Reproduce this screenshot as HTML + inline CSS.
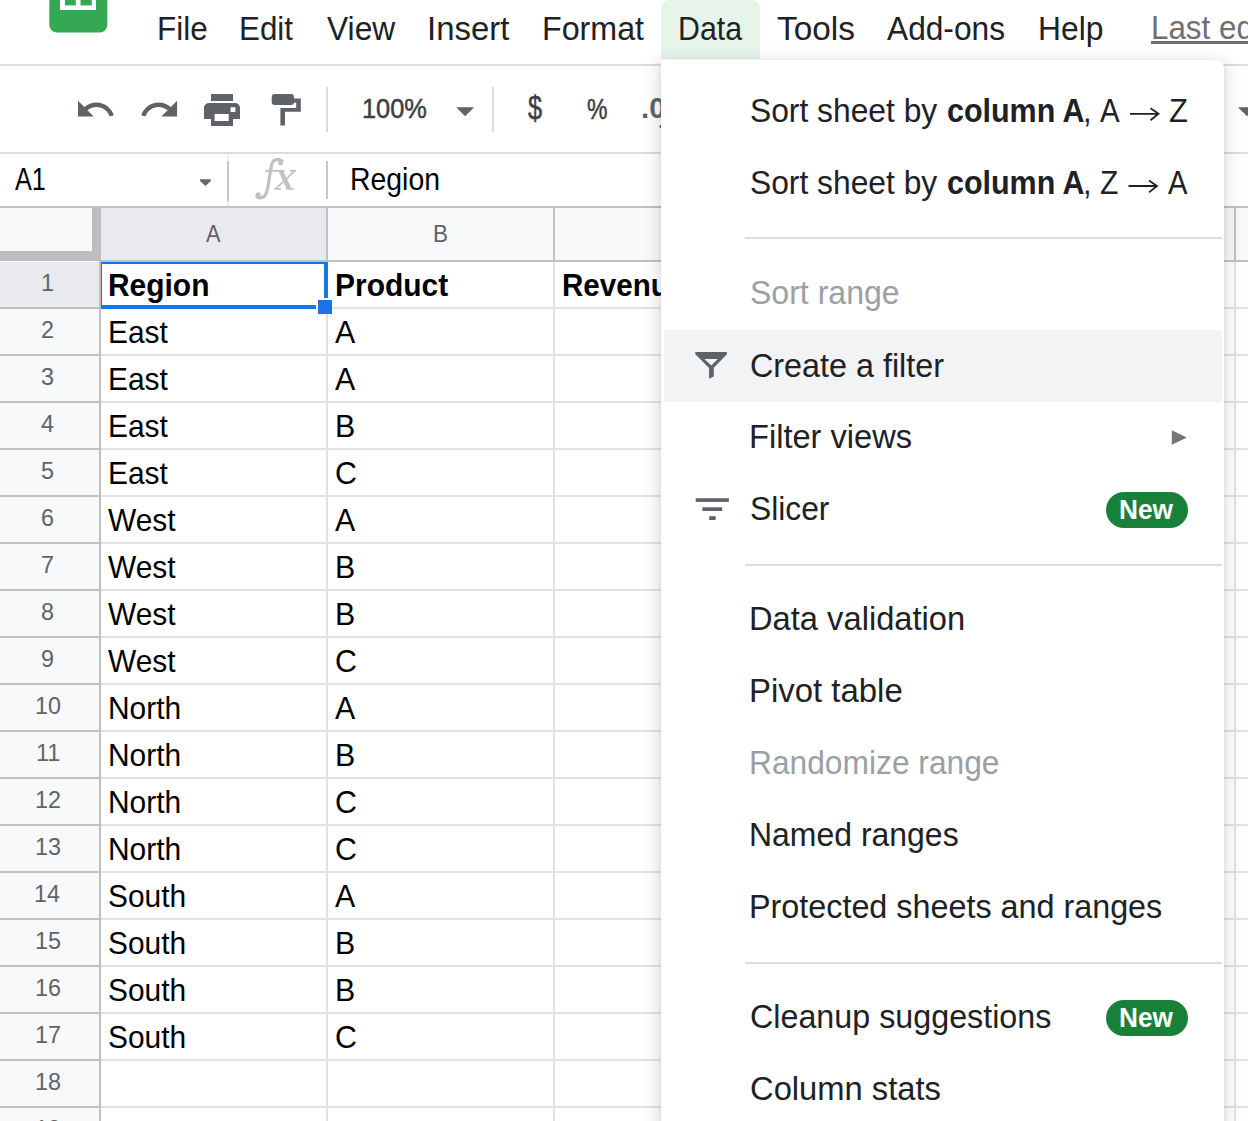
<!DOCTYPE html>
<html><head><meta charset="utf-8"><style>
html,body{margin:0;padding:0;}
body{width:1248px;height:1121px;overflow:hidden;position:relative;background:#fff;font-family:"Liberation Sans",sans-serif;}
.t{position:absolute;white-space:pre;transform-origin:0 0;}
.r{position:absolute;}
.ov{position:absolute;left:0;top:0;}
</style></head><body>
<div class=r style="left:661px;top:0px;width:99px;height:59px;background:#e6f4ea;border-radius:8px 8px 0 0;"></div><div class=r style="left:0px;top:64px;width:1248px;height:2px;background:#dadce0;"></div><div class=r style="left:0px;top:152px;width:1248px;height:2px;background:#dadce0;"></div><div class=r style="left:326px;top:87px;width:2px;height:45px;background:#dadce0;"></div><div class=r style="left:492px;top:87px;width:2px;height:45px;background:#dadce0;"></div><div class=r style="left:227px;top:154px;width:2px;height:52px;background:#efefef;"></div><div class=r style="left:227px;top:161px;width:2px;height:40px;background:#c7c7c7;"></div><div class=r style="left:326px;top:161px;width:2px;height:38px;background:#c7c7c7;"></div><div class=r style="left:0px;top:206px;width:1248px;height:2px;background:#c0c0c0;"></div><div class=r style="left:0px;top:208px;width:1248px;height:52px;background:#f8f9fa;"></div><div class=r style="left:101px;top:208px;width:225px;height:52px;background:#e8eaed;"></div><div class=r style="left:92px;top:208px;width:9px;height:53px;background:#bdbdbd;"></div><div class=r style="left:0px;top:251px;width:101px;height:10px;background:#bdbdbd;"></div><div class=r style="left:326px;top:208px;width:2px;height:54px;background:#c0c0c0;"></div><div class=r style="left:553px;top:208px;width:2px;height:54px;background:#c0c0c0;"></div><div class=r style="left:780px;top:208px;width:2px;height:54px;background:#c0c0c0;"></div><div class=r style="left:1007px;top:208px;width:2px;height:54px;background:#c0c0c0;"></div><div class=r style="left:1234px;top:208px;width:2px;height:54px;background:#c0c0c0;"></div><div class=r style="left:99px;top:260px;width:1149px;height:2px;background:#c0c0c0;"></div><div class=r style="left:0px;top:262px;width:99px;height:859px;background:#f8f9fa;"></div><div class=r style="left:0px;top:262px;width:99px;height:45px;background:#e8eaed;"></div><div class=r style="left:99px;top:261px;width:2px;height:860px;background:#c0c0c0;"></div><div class=r style="left:0px;top:307.0px;width:99px;height:2.0px;background:#c0c0c0;"></div><div class=r style="left:101px;top:307.0px;width:1147px;height:2.0px;background:#e2e2e2;"></div><div class=r style="left:0px;top:354.0px;width:99px;height:2.0px;background:#c0c0c0;"></div><div class=r style="left:101px;top:354.0px;width:1147px;height:2.0px;background:#e2e2e2;"></div><div class=r style="left:0px;top:401.0px;width:99px;height:2.0px;background:#c0c0c0;"></div><div class=r style="left:101px;top:401.0px;width:1147px;height:2.0px;background:#e2e2e2;"></div><div class=r style="left:0px;top:448.0px;width:99px;height:2.0px;background:#c0c0c0;"></div><div class=r style="left:101px;top:448.0px;width:1147px;height:2.0px;background:#e2e2e2;"></div><div class=r style="left:0px;top:495.0px;width:99px;height:2.0px;background:#c0c0c0;"></div><div class=r style="left:101px;top:495.0px;width:1147px;height:2.0px;background:#e2e2e2;"></div><div class=r style="left:0px;top:542.0px;width:99px;height:2.0px;background:#c0c0c0;"></div><div class=r style="left:101px;top:542.0px;width:1147px;height:2.0px;background:#e2e2e2;"></div><div class=r style="left:0px;top:589.0px;width:99px;height:2.0px;background:#c0c0c0;"></div><div class=r style="left:101px;top:589.0px;width:1147px;height:2.0px;background:#e2e2e2;"></div><div class=r style="left:0px;top:636.0px;width:99px;height:2.0px;background:#c0c0c0;"></div><div class=r style="left:101px;top:636.0px;width:1147px;height:2.0px;background:#e2e2e2;"></div><div class=r style="left:0px;top:683.0px;width:99px;height:2.0px;background:#c0c0c0;"></div><div class=r style="left:101px;top:683.0px;width:1147px;height:2.0px;background:#e2e2e2;"></div><div class=r style="left:0px;top:730.0px;width:99px;height:2.0px;background:#c0c0c0;"></div><div class=r style="left:101px;top:730.0px;width:1147px;height:2.0px;background:#e2e2e2;"></div><div class=r style="left:0px;top:777.0px;width:99px;height:2.0px;background:#c0c0c0;"></div><div class=r style="left:101px;top:777.0px;width:1147px;height:2.0px;background:#e2e2e2;"></div><div class=r style="left:0px;top:824.0px;width:99px;height:2.0px;background:#c0c0c0;"></div><div class=r style="left:101px;top:824.0px;width:1147px;height:2.0px;background:#e2e2e2;"></div><div class=r style="left:0px;top:871.0px;width:99px;height:2.0px;background:#c0c0c0;"></div><div class=r style="left:101px;top:871.0px;width:1147px;height:2.0px;background:#e2e2e2;"></div><div class=r style="left:0px;top:918.0px;width:99px;height:2.0px;background:#c0c0c0;"></div><div class=r style="left:101px;top:918.0px;width:1147px;height:2.0px;background:#e2e2e2;"></div><div class=r style="left:0px;top:965.0px;width:99px;height:2.0px;background:#c0c0c0;"></div><div class=r style="left:101px;top:965.0px;width:1147px;height:2.0px;background:#e2e2e2;"></div><div class=r style="left:0px;top:1012.0px;width:99px;height:2.0px;background:#c0c0c0;"></div><div class=r style="left:101px;top:1012.0px;width:1147px;height:2.0px;background:#e2e2e2;"></div><div class=r style="left:0px;top:1059.0px;width:99px;height:2.0px;background:#c0c0c0;"></div><div class=r style="left:101px;top:1059.0px;width:1147px;height:2.0px;background:#e2e2e2;"></div><div class=r style="left:0px;top:1106.0px;width:99px;height:2.0px;background:#c0c0c0;"></div><div class=r style="left:101px;top:1106.0px;width:1147px;height:2.0px;background:#e2e2e2;"></div><div class=r style="left:0px;top:1153.0px;width:99px;height:2.0px;background:#c0c0c0;"></div><div class=r style="left:101px;top:1153.0px;width:1147px;height:2.0px;background:#e2e2e2;"></div><div class=r style="left:326px;top:262px;width:2px;height:859px;background:#e2e2e2;"></div><div class=r style="left:553px;top:262px;width:2px;height:859px;background:#e2e2e2;"></div><div class=r style="left:780px;top:262px;width:2px;height:859px;background:#e2e2e2;"></div><div class=r style="left:1007px;top:262px;width:2px;height:859px;background:#e2e2e2;"></div><div class=r style="left:1234px;top:262px;width:2px;height:859px;background:#e2e2e2;"></div>
<div class=t style="left:157.19px;top:11.80px;font-size:33.0px;line-height:33.0px;font-weight:400;color:#202124;font-family:'Liberation Sans';transform:scaleX(0.9540);">File</div><div class=t style="left:239.40px;top:11.80px;font-size:33.0px;line-height:33.0px;font-weight:400;color:#202124;font-family:'Liberation Sans';transform:scaleX(0.9491);">Edit</div><div class=t style="left:326.70px;top:11.80px;font-size:33.0px;line-height:33.0px;font-weight:400;color:#202124;font-family:'Liberation Sans';transform:scaleX(0.9620);">View</div><div class=t style="left:426.81px;top:11.80px;font-size:33.0px;line-height:33.0px;font-weight:400;color:#202124;font-family:'Liberation Sans';transform:scaleX(0.9975);">Insert</div><div class=t style="left:542.05px;top:11.80px;font-size:33.0px;line-height:33.0px;font-weight:400;color:#202124;font-family:'Liberation Sans';transform:scaleX(0.9767);">Format</div><div class=t style="left:678.16px;top:11.80px;font-size:33.0px;line-height:33.0px;font-weight:400;color:#202124;font-family:'Liberation Sans';transform:scaleX(0.9191);">Data</div><div class=t style="left:776.90px;top:11.80px;font-size:33.0px;line-height:33.0px;font-weight:400;color:#202124;font-family:'Liberation Sans';transform:scaleX(1.0105);">Tools</div><div class=t style="left:887.30px;top:11.80px;font-size:33.0px;line-height:33.0px;font-weight:400;color:#202124;font-family:'Liberation Sans';transform:scaleX(0.9598);">Add-ons</div><div class=t style="left:1037.87px;top:11.80px;font-size:33.0px;line-height:33.0px;font-weight:400;color:#202124;font-family:'Liberation Sans';transform:scaleX(0.9631);">Help</div><div class=t style="left:1150.80px;top:10.90px;font-size:33.0px;line-height:33.0px;font-weight:400;color:#6f6f6f;font-family:'Liberation Sans';transform:scaleX(0.9500);">Last edit was seconds ago</div><div class=t style="left:361.68px;top:95.00px;font-size:27.9px;line-height:27.9px;font-weight:400;color:#3c4043;font-family:'Liberation Sans';transform:scaleX(0.9101);-webkit-text-stroke:0.5px #3c4043;">100%</div><div class=t style="left:527.80px;top:92.30px;font-size:32.5px;line-height:32.5px;font-weight:400;color:#3c4043;font-family:'Liberation Sans';transform:scaleX(0.7778);-webkit-text-stroke:0.5px #3c4043;">$</div><div class=t style="left:587.21px;top:94.60px;font-size:29.1px;line-height:29.1px;font-weight:400;color:#3c4043;font-family:'Liberation Sans';transform:scaleX(0.7917);-webkit-text-stroke:0.5px #3c4043;">%</div><div class=t style="left:641.00px;top:92.70px;font-size:29.3px;line-height:29.3px;font-weight:700;color:#5f6368;font-family:'Liberation Sans';">.0</div><div class=t style="left:15.30px;top:165.10px;font-size:30.8px;line-height:30.8px;font-weight:400;color:#000;font-family:'Liberation Sans';transform:scaleX(0.8189);">A1</div><div class=t style="left:349.98px;top:164.10px;font-size:31.25px;line-height:31.25px;font-weight:400;color:#000;font-family:'Liberation Sans';transform:scaleX(0.9083);">Region</div><div class=t style="left:206.10px;top:221.70px;font-size:24.4px;line-height:24.4px;font-weight:400;color:#5f6368;font-family:'Liberation Sans';transform:scaleX(0.8912);">A</div><div class=t style="left:433.05px;top:221.80px;font-size:24.4px;line-height:24.4px;font-weight:400;color:#5f6368;font-family:'Liberation Sans';transform:scaleX(0.9231);">B</div><div class=t style="left:41.01px;top:271.30px;font-size:24.1px;line-height:24.1px;font-weight:400;color:#5f6368;font-family:'Liberation Sans';transform:scaleX(0.9700);">1</div><div class=t style="left:41.01px;top:318.00px;font-size:24.1px;line-height:24.1px;font-weight:400;color:#5f6368;font-family:'Liberation Sans';transform:scaleX(0.9700);">2</div><div class=t style="left:41.01px;top:365.00px;font-size:24.1px;line-height:24.1px;font-weight:400;color:#5f6368;font-family:'Liberation Sans';transform:scaleX(0.9700);">3</div><div class=t style="left:41.49px;top:412.00px;font-size:24.1px;line-height:24.1px;font-weight:400;color:#5f6368;font-family:'Liberation Sans';transform:scaleX(0.9700);">4</div><div class=t style="left:41.01px;top:459.00px;font-size:24.1px;line-height:24.1px;font-weight:400;color:#5f6368;font-family:'Liberation Sans';transform:scaleX(0.9700);">5</div><div class=t style="left:41.01px;top:506.00px;font-size:24.1px;line-height:24.1px;font-weight:400;color:#5f6368;font-family:'Liberation Sans';transform:scaleX(0.9700);">6</div><div class=t style="left:41.01px;top:553.00px;font-size:24.1px;line-height:24.1px;font-weight:400;color:#5f6368;font-family:'Liberation Sans';transform:scaleX(0.9700);">7</div><div class=t style="left:41.01px;top:600.00px;font-size:24.1px;line-height:24.1px;font-weight:400;color:#5f6368;font-family:'Liberation Sans';transform:scaleX(0.9700);">8</div><div class=t style="left:41.01px;top:647.00px;font-size:24.1px;line-height:24.1px;font-weight:400;color:#5f6368;font-family:'Liberation Sans';transform:scaleX(0.9700);">9</div><div class=t style="left:34.70px;top:694.00px;font-size:24.1px;line-height:24.1px;font-weight:400;color:#5f6368;font-family:'Liberation Sans';transform:scaleX(0.9700);">10</div><div class=t style="left:35.67px;top:741.00px;font-size:24.1px;line-height:24.1px;font-weight:400;color:#5f6368;font-family:'Liberation Sans';transform:scaleX(0.9700);">11</div><div class=t style="left:34.70px;top:788.00px;font-size:24.1px;line-height:24.1px;font-weight:400;color:#5f6368;font-family:'Liberation Sans';transform:scaleX(0.9700);">12</div><div class=t style="left:34.70px;top:835.00px;font-size:24.1px;line-height:24.1px;font-weight:400;color:#5f6368;font-family:'Liberation Sans';transform:scaleX(0.9700);">13</div><div class=t style="left:34.22px;top:882.00px;font-size:24.1px;line-height:24.1px;font-weight:400;color:#5f6368;font-family:'Liberation Sans';transform:scaleX(0.9700);">14</div><div class=t style="left:34.70px;top:929.00px;font-size:24.1px;line-height:24.1px;font-weight:400;color:#5f6368;font-family:'Liberation Sans';transform:scaleX(0.9700);">15</div><div class=t style="left:34.70px;top:976.00px;font-size:24.1px;line-height:24.1px;font-weight:400;color:#5f6368;font-family:'Liberation Sans';transform:scaleX(0.9700);">16</div><div class=t style="left:34.70px;top:1023.00px;font-size:24.1px;line-height:24.1px;font-weight:400;color:#5f6368;font-family:'Liberation Sans';transform:scaleX(0.9700);">17</div><div class=t style="left:34.70px;top:1070.00px;font-size:24.1px;line-height:24.1px;font-weight:400;color:#5f6368;font-family:'Liberation Sans';transform:scaleX(0.9700);">18</div><div class=t style="left:34.70px;top:1117.00px;font-size:24.1px;line-height:24.1px;font-weight:400;color:#5f6368;font-family:'Liberation Sans';transform:scaleX(0.9700);">19</div><div class=t style="left:107.72px;top:270.00px;font-size:31.8px;line-height:31.8px;font-weight:700;color:#000;font-family:'Liberation Sans';transform:scaleX(0.9413);">Region</div><div class=t style="left:334.52px;top:270.00px;font-size:31.8px;line-height:31.8px;font-weight:700;color:#000;font-family:'Liberation Sans';transform:scaleX(0.9424);">Product</div><div class=t style="left:561.74px;top:270.00px;font-size:31.8px;line-height:31.8px;font-weight:700;color:#000;font-family:'Liberation Sans';transform:scaleX(0.9300);">Revenue</div><div class=t style="left:107.90px;top:317.40px;font-size:31.8px;line-height:31.8px;font-weight:400;color:#000;font-family:'Liberation Sans';transform:scaleX(0.9400);">East</div><div class=t style="left:334.50px;top:317.40px;font-size:31.8px;line-height:31.8px;font-weight:400;color:#000;font-family:'Liberation Sans';transform:scaleX(0.9550);">A</div><div class=t style="left:107.90px;top:364.40px;font-size:31.8px;line-height:31.8px;font-weight:400;color:#000;font-family:'Liberation Sans';transform:scaleX(0.9400);">East</div><div class=t style="left:334.50px;top:364.40px;font-size:31.8px;line-height:31.8px;font-weight:400;color:#000;font-family:'Liberation Sans';transform:scaleX(0.9550);">A</div><div class=t style="left:107.90px;top:411.40px;font-size:31.8px;line-height:31.8px;font-weight:400;color:#000;font-family:'Liberation Sans';transform:scaleX(0.9400);">East</div><div class=t style="left:334.50px;top:411.40px;font-size:31.8px;line-height:31.8px;font-weight:400;color:#000;font-family:'Liberation Sans';transform:scaleX(0.9550);">B</div><div class=t style="left:107.90px;top:458.40px;font-size:31.8px;line-height:31.8px;font-weight:400;color:#000;font-family:'Liberation Sans';transform:scaleX(0.9400);">East</div><div class=t style="left:334.50px;top:458.40px;font-size:31.8px;line-height:31.8px;font-weight:400;color:#000;font-family:'Liberation Sans';transform:scaleX(0.9550);">C</div><div class=t style="left:107.90px;top:505.40px;font-size:31.8px;line-height:31.8px;font-weight:400;color:#000;font-family:'Liberation Sans';transform:scaleX(0.9400);">West</div><div class=t style="left:334.50px;top:505.40px;font-size:31.8px;line-height:31.8px;font-weight:400;color:#000;font-family:'Liberation Sans';transform:scaleX(0.9550);">A</div><div class=t style="left:107.90px;top:552.40px;font-size:31.8px;line-height:31.8px;font-weight:400;color:#000;font-family:'Liberation Sans';transform:scaleX(0.9400);">West</div><div class=t style="left:334.50px;top:552.40px;font-size:31.8px;line-height:31.8px;font-weight:400;color:#000;font-family:'Liberation Sans';transform:scaleX(0.9550);">B</div><div class=t style="left:107.90px;top:599.40px;font-size:31.8px;line-height:31.8px;font-weight:400;color:#000;font-family:'Liberation Sans';transform:scaleX(0.9400);">West</div><div class=t style="left:334.50px;top:599.40px;font-size:31.8px;line-height:31.8px;font-weight:400;color:#000;font-family:'Liberation Sans';transform:scaleX(0.9550);">B</div><div class=t style="left:107.90px;top:646.40px;font-size:31.8px;line-height:31.8px;font-weight:400;color:#000;font-family:'Liberation Sans';transform:scaleX(0.9400);">West</div><div class=t style="left:334.50px;top:646.40px;font-size:31.8px;line-height:31.8px;font-weight:400;color:#000;font-family:'Liberation Sans';transform:scaleX(0.9550);">C</div><div class=t style="left:107.90px;top:693.40px;font-size:31.8px;line-height:31.8px;font-weight:400;color:#000;font-family:'Liberation Sans';transform:scaleX(0.9400);">North</div><div class=t style="left:334.50px;top:693.40px;font-size:31.8px;line-height:31.8px;font-weight:400;color:#000;font-family:'Liberation Sans';transform:scaleX(0.9550);">A</div><div class=t style="left:107.90px;top:740.40px;font-size:31.8px;line-height:31.8px;font-weight:400;color:#000;font-family:'Liberation Sans';transform:scaleX(0.9400);">North</div><div class=t style="left:334.50px;top:740.40px;font-size:31.8px;line-height:31.8px;font-weight:400;color:#000;font-family:'Liberation Sans';transform:scaleX(0.9550);">B</div><div class=t style="left:107.90px;top:787.40px;font-size:31.8px;line-height:31.8px;font-weight:400;color:#000;font-family:'Liberation Sans';transform:scaleX(0.9400);">North</div><div class=t style="left:334.50px;top:787.40px;font-size:31.8px;line-height:31.8px;font-weight:400;color:#000;font-family:'Liberation Sans';transform:scaleX(0.9550);">C</div><div class=t style="left:107.90px;top:834.40px;font-size:31.8px;line-height:31.8px;font-weight:400;color:#000;font-family:'Liberation Sans';transform:scaleX(0.9400);">North</div><div class=t style="left:334.50px;top:834.40px;font-size:31.8px;line-height:31.8px;font-weight:400;color:#000;font-family:'Liberation Sans';transform:scaleX(0.9550);">C</div><div class=t style="left:107.90px;top:881.40px;font-size:31.8px;line-height:31.8px;font-weight:400;color:#000;font-family:'Liberation Sans';transform:scaleX(0.9400);">South</div><div class=t style="left:334.50px;top:881.40px;font-size:31.8px;line-height:31.8px;font-weight:400;color:#000;font-family:'Liberation Sans';transform:scaleX(0.9550);">A</div><div class=t style="left:107.90px;top:928.40px;font-size:31.8px;line-height:31.8px;font-weight:400;color:#000;font-family:'Liberation Sans';transform:scaleX(0.9400);">South</div><div class=t style="left:334.50px;top:928.40px;font-size:31.8px;line-height:31.8px;font-weight:400;color:#000;font-family:'Liberation Sans';transform:scaleX(0.9550);">B</div><div class=t style="left:107.90px;top:975.40px;font-size:31.8px;line-height:31.8px;font-weight:400;color:#000;font-family:'Liberation Sans';transform:scaleX(0.9400);">South</div><div class=t style="left:334.50px;top:975.40px;font-size:31.8px;line-height:31.8px;font-weight:400;color:#000;font-family:'Liberation Sans';transform:scaleX(0.9550);">B</div><div class=t style="left:107.90px;top:1022.40px;font-size:31.8px;line-height:31.8px;font-weight:400;color:#000;font-family:'Liberation Sans';transform:scaleX(0.9400);">South</div><div class=t style="left:334.50px;top:1022.40px;font-size:31.8px;line-height:31.8px;font-weight:400;color:#000;font-family:'Liberation Sans';transform:scaleX(0.9550);">C</div>
<div class=r style="left:101px;top:262px;width:227px;height:2px;background:#1a73e8;"></div><div class=r style="left:101px;top:262px;width:1px;height:47px;background:#1a73e8;"></div><div class=r style="left:324px;top:262px;width:4px;height:36px;background:#1a73e8;"></div><div class=r style="left:101px;top:305px;width:215px;height:4px;background:#1a73e8;"></div><div class=r style="left:316px;top:298px;width:16px;height:16px;background:#fff;"></div><div class=r style="left:318px;top:300px;width:14px;height:14px;background:#1a73e8;"></div>

<svg class=ov width="1248" height="1121" viewBox="0 0 1248 1121">
 <!-- logo -->
 <rect x="49.3" y="-20" width="58" height="52.4" rx="7.7" fill="#34a853"/>
 <rect x="60" y="-20" width="36" height="30" fill="#fff"/>
 <rect x="64.9" y="-20" width="10.9" height="25.4" fill="#34a853"/>
 <rect x="80.5" y="-20" width="11.3" height="25.4" fill="#34a853"/>
 <!-- undo -->
 <g transform="translate(74.5,88.5) scale(1.75)" fill="#5f6368"><path d="M12.5 8c-2.65 0-5.05.99-6.9 2.6L2 7v9h9l-3.62-3.62c1.39-1.16 3.16-1.88 5.12-1.88 3.54 0 6.55 2.31 7.6 5.5l2.37-.78C21.08 11.03 17.15 8 12.5 8z"/></g>
 <!-- redo -->
 <g transform="translate(138.6,88.5) scale(1.75)" fill="#5f6368"><path d="M18.4 10.6C16.55 8.99 14.15 8 11.5 8c-4.65 0-8.58 3.03-9.96 7.22L3.9 16c1.05-3.19 4.05-5.5 7.6-5.5 1.95 0 3.73.72 5.12 1.88L13 16h9V7l-3.6 3.6z"/></g>
 <!-- print -->
 <path fill="#5f6368" fill-rule="evenodd" d="M211 94h22v7h-22z M209 103h26c2.8 0 5 2.2 5 5v11h-7v7h-22v-7h-7v-11c0-2.8 2.2-5 5-5z M214.6 113.9h14.1v7.1h-14.1z M230.6 107.3h4.8v4.7h-4.8z"/>
 <!-- paint format -->
 <rect x="271.7" y="94" width="22.3" height="11.1" rx="3" fill="#5f6368"/>
 <path fill="#5f6368" d="M294 98.5h6.8v13.3h-15.8v13.7h-4.6v-17.6h15.8v-5.2h-2.2z"/>
 <!-- zoom dropdown -->
 <path fill="#5f6368" d="M456.1 107.2h18l-9 9z"/>
 <!-- decimal arrow tip -->
 <path fill="#5f6368" d="M658.9 126.5L661.5 124.3V128.7Z"/>
 <!-- name box arrow -->
 <path fill="#676767" d="M200.1 179.2H210.8V181L205.45 186L200.1 181Z"/>
 <!-- fx -->
 <g fill="#c0c1c3"><path d="M282.6 162.2C281.8 160 279.5 159.3 277 159.3C273.5 159.5 271.9 162.5 271.3 166L267.8 187.5C266.8 194 263.8 197.9 260.3 197.9C258.6 197.9 257 197 256.3 195.3" fill="none" stroke="#c0c1c3" stroke-width="3.2"/>
  <circle cx="280.6" cy="163.0" r="2.4"/><circle cx="258.3" cy="194.6" r="2.4"/>
  <rect x="265.1" y="169.9" width="19.4" height="1.9"/><rect x="289.9" y="169.9" width="6.1" height="1.9"/>
  <rect x="274.2" y="188" width="6.6" height="1.8"/><rect x="286.2" y="188" width="7.4" height="1.8"/>
  <path d="M278.9 171.8L283.5 171.8L291.4 188L286.2 188Z"/><path d="M292.6 171.8L295 171.8L277.8 188L275.4 188Z"/></g>
 <!-- toolbar right edge arrow -->
 <path fill="#5f6368" d="M1238 107.2h18l-9 9z"/>
</svg>
<div class=r style="left:1151px;top:41px;width:97px;height:3px;background:#6f6f6f;"></div>
<div id=dd style="position:absolute;left:661px;top:60px;width:563px;height:1100px;background:#fff;border-radius:0 8px 8px 8px;box-shadow:0 4px 16px 4px rgba(60,64,67,.15),0 2px 4px rgba(60,64,67,.1);"></div>
<div class=r style="left:664px;top:330px;width:558px;height:72px;background:#f1f3f4;"></div><div class=r style="left:745px;top:237px;width:477px;height:2px;background:#dadce0;"></div><div class=r style="left:745px;top:564px;width:477px;height:2px;background:#dadce0;"></div><div class=r style="left:745px;top:962px;width:477px;height:2px;background:#dadce0;"></div><div class=r style="left:1106px;top:491.8px;width:82px;height:36.3px;border-radius:18px;background:#188038"></div><div class=r style="left:1106px;top:1000.2px;width:82px;height:36px;border-radius:18px;background:#188038"></div>

<svg class=ov width="1248" height="1121" viewBox="0 0 1248 1121">
 <path fill="#5f6368" d="M695.3 352H726.9V354.3L713.8 367.7V376.6L709.1 378.8V367.9L695.3 354.3Z M704.4 359H717.8L711.3 365.6Z" fill-rule="evenodd"/>
 <rect x="695.7" y="498.2" width="33.2" height="3.7" fill="#5f6368"/>
 <rect x="702.4" y="507.3" width="19.8" height="3.7" fill="#5f6368"/>
 <rect x="709.2" y="516.2" width="6.5" height="3.8" fill="#5f6368"/>
 <path fill="#757575" d="M1171.8 430.3L1186.9 437.55L1171.8 444.8Z"/>
 <!-- arrows -->
 <g stroke="#202124" stroke-width="1.8" fill="none">
   <path d="M1130 113.8H1158.5 M1150.5 108.2L1158.5 113.8L1150.5 120.2"/>
   <path d="M1128.5 186H1157 M1149 180.4L1157 186L1149 192.4"/>
 </g>
</svg>
<div class=t style="left:749.62px;top:94.80px;font-size:32.4px;line-height:32.4px;font-weight:400;color:#202124;font-family:'Liberation Sans';transform:scaleX(0.9811);">Sort sheet by</div><div class=t style="left:946.76px;top:94.80px;font-size:32.4px;line-height:32.4px;font-weight:700;color:#202124;font-family:'Liberation Sans';transform:scaleX(0.9400);">column A</div><div class=t style="left:1082.55px;top:94.80px;font-size:32.4px;line-height:32.4px;font-weight:400;color:#202124;font-family:'Liberation Sans';transform:scaleX(0.9500);">,</div><div class=t style="left:1100.00px;top:94.80px;font-size:32.4px;line-height:32.4px;font-weight:400;color:#202124;font-family:'Liberation Sans';transform:scaleX(0.9091);">A</div><div class=t style="left:1169.04px;top:94.80px;font-size:32.4px;line-height:32.4px;font-weight:400;color:#202124;font-family:'Liberation Sans';transform:scaleX(0.9556);">Z</div><div class=t style="left:749.62px;top:166.80px;font-size:32.4px;line-height:32.4px;font-weight:400;color:#202124;font-family:'Liberation Sans';transform:scaleX(0.9811);">Sort sheet by</div><div class=t style="left:946.76px;top:166.80px;font-size:32.4px;line-height:32.4px;font-weight:700;color:#202124;font-family:'Liberation Sans';transform:scaleX(0.9400);">column A</div><div class=t style="left:1082.55px;top:166.80px;font-size:32.4px;line-height:32.4px;font-weight:400;color:#202124;font-family:'Liberation Sans';transform:scaleX(0.9500);">,</div><div class=t style="left:1099.77px;top:166.80px;font-size:32.4px;line-height:32.4px;font-weight:400;color:#202124;font-family:'Liberation Sans';transform:scaleX(0.9278);">Z</div><div class=t style="left:1167.90px;top:166.80px;font-size:32.4px;line-height:32.4px;font-weight:400;color:#202124;font-family:'Liberation Sans';transform:scaleX(0.9000);">A</div><div class=t style="left:749.61px;top:276.80px;font-size:32.4px;line-height:32.4px;font-weight:400;color:#9aa0a6;font-family:'Liberation Sans';transform:scaleX(0.9893);">Sort range</div><div class=t style="left:749.60px;top:349.50px;font-size:32.4px;line-height:32.4px;font-weight:400;color:#202124;font-family:'Liberation Sans';transform:scaleX(0.9979);">Create a filter</div><div class=t style="left:748.59px;top:420.90px;font-size:32.4px;line-height:32.4px;font-weight:400;color:#202124;font-family:'Liberation Sans';transform:scaleX(1.0069);">Filter views</div><div class=t style="left:749.62px;top:492.50px;font-size:32.4px;line-height:32.4px;font-weight:400;color:#202124;font-family:'Liberation Sans';transform:scaleX(0.9800);">Slicer</div><div class=t style="left:748.58px;top:603.00px;font-size:32.4px;line-height:32.4px;font-weight:400;color:#202124;font-family:'Liberation Sans';transform:scaleX(1.0090);">Data validation</div><div class=t style="left:748.57px;top:674.60px;font-size:32.4px;line-height:32.4px;font-weight:400;color:#202124;font-family:'Liberation Sans';transform:scaleX(1.0162);">Pivot table</div><div class=t style="left:748.64px;top:746.60px;font-size:32.4px;line-height:32.4px;font-weight:400;color:#9aa0a6;font-family:'Liberation Sans';transform:scaleX(0.9798);">Randomize range</div><div class=t style="left:748.63px;top:819.00px;font-size:32.4px;line-height:32.4px;font-weight:400;color:#202124;font-family:'Liberation Sans';transform:scaleX(0.9867);">Named ranges</div><div class=t style="left:748.60px;top:891.00px;font-size:32.4px;line-height:32.4px;font-weight:400;color:#202124;font-family:'Liberation Sans';transform:scaleX(0.9978);">Protected sheets and ranges</div><div class=t style="left:749.60px;top:1001.30px;font-size:32.4px;line-height:32.4px;font-weight:400;color:#202124;font-family:'Liberation Sans';transform:scaleX(0.9963);">Cleanup suggestions</div><div class=t style="left:749.59px;top:1073.40px;font-size:32.4px;line-height:32.4px;font-weight:400;color:#202124;font-family:'Liberation Sans';transform:scaleX(1.0102);">Column stats</div><div class=t style="left:1119.43px;top:497.00px;font-size:27.0px;line-height:27.0px;font-weight:700;color:#fff;font-family:'Liberation Sans';transform:scaleX(0.9709);">New</div><div class=t style="left:1119.43px;top:1005.20px;font-size:27.0px;line-height:27.0px;font-weight:700;color:#fff;font-family:'Liberation Sans';transform:scaleX(0.9709);">New</div>
</body></html>
